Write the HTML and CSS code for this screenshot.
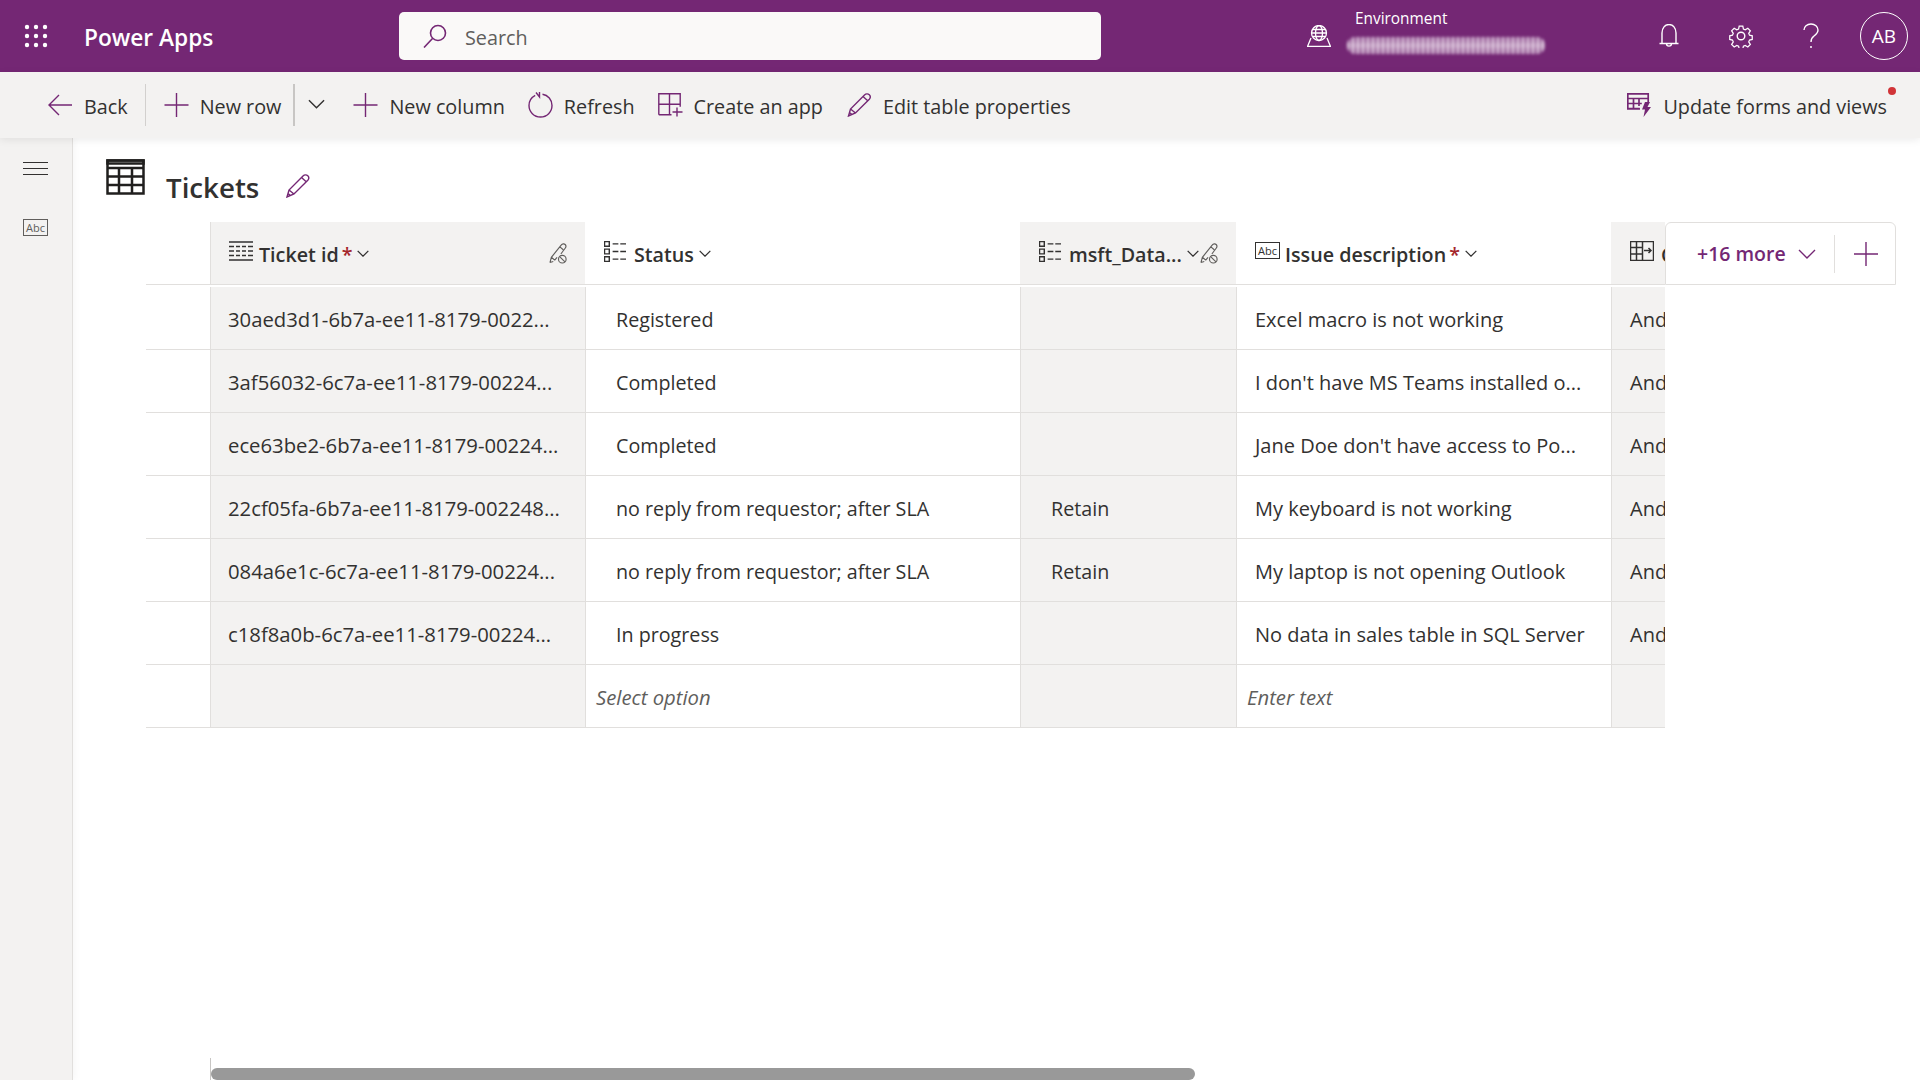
FILE: index.html
```html
<!DOCTYPE html>
<html lang="en">
<head>
    <meta charset="UTF-8">
    <meta name="viewport" content="width=device-width, initial-scale=1.0">
    <title>Tickets - Power Apps</title>
    <link rel="stylesheet" href="styles.css">
</head>
<body>
    <svg class="defs" width="0" height="0">
        <defs>
            <symbol id="i-plus" viewBox="0 0 24 24"><path d="M12 0v24M0 12h24"/></symbol>
            <symbol id="i-chev" viewBox="0 0 18 10"><path d="M1 1l8 8 8-8"/></symbol>
            <symbol id="i-pencil" viewBox="0 0 24 24"><path d="M1 23l2-7L17 2c1.500-1.500 3.500-1.500 4.800-.2 1.200 1.200 1.200 3 0 4.400L8 20zM3 16l5 4M15.500 3.500l5 4.500M2 19.500l2.500 2"/></symbol>
            <symbol id="i-locked" viewBox="0 0 20 24"><path d="M1 21.500l1.500-5.500L13 3c1-1.300 3-1.500 4-.5s1 2.700 0 4l-4.500 6M2.500 16l3.500 3M11.500 5l3.500 3M6 19l2.500-3M1 21.500l3.500-1"/><circle cx="14" cy="18" r="4"/><path d="M11.200 15.200l5.600 5.600"/></symbol>
            <symbol id="i-choice" viewBox="0 0 24 22"><path d="M.5.500h5v5h-5zM.5 8.500h5v5h-5zM.5 16.500h5v5h-5zM9 3h6M17 3h6M9 11h6M17 11h6M9 19h6M17 19h6"/></symbol>
        </defs>
    </svg>

    <header class="topbar">
        <svg class="waffle" width="24" height="24" viewBox="0 0 24 24">
            <circle cx="3" cy="3" r="2.200"/><circle cx="12" cy="3" r="2.200"/><circle cx="21" cy="3" r="2.200"/>
            <circle cx="3" cy="12" r="2.200"/><circle cx="12" cy="12" r="2.200"/><circle cx="21" cy="12" r="2.200"/>
            <circle cx="3" cy="21" r="2.200"/><circle cx="12" cy="21" r="2.200"/><circle cx="21" cy="21" r="2.200"/>
        </svg>
        <div class="app-name">Power Apps</div>
        <div class="search">
            <svg class="search-icon" width="24" height="24" viewBox="0 0 24 24"><circle cx="15" cy="9" r="7.500"/><path d="M9.500 14.500L1 23.500"/></svg>
            <span>Search</span>
        </div>
        <div class="env">
            <svg class="env-icon" width="24" height="22" viewBox="0 0 24 22"><circle cx="12" cy="8" r="7.500"/><ellipse cx="12" cy="8" rx="3.500" ry="7.500"/><path d="M4.500 8h15M5.500 4.500h13M5.500 11.500h13M4 13L.5 21.500h23L20 13"/></svg>
            <div class="env-text">
                <div class="env-label">Environment</div>
                <div class="env-blur"></div>
            </div>
        </div>
        <div class="top-actions">
            <svg class="top-icon" width="20" height="24" viewBox="0 0 20 24"><path d="M.5 19.500h19M3 19.500V9c0-5 3-8.500 7-8.500s7 3.500 7 8.500v10.500M7.500 19.500c0 3.500 5 3.500 5 0"/></svg>
            <svg class="top-icon" width="24" height="24" viewBox="0 0 24 24"><circle cx="12" cy="12" r="3.800"/><path d="M10 1h4l.7 3.300 2 .9 2.900-1.800 2.800 2.800-1.800 2.900.9 2 3 .7v4l-3 .7-.9 2 1.800 2.900-2.800 2.800-2.900-1.800-2 .9-.7 3h-4l-.7-3-2-.9-2.900 1.800-2.800-2.800 1.800-2.900-.9-2-3-.7v-4l3-.7.9-2-1.800-2.900 2.800-2.800 2.900 1.800 2-.9z" transform="translate(1.200 1.200) scale(.9)"/></svg>
            <svg class="top-icon" width="16" height="26" viewBox="0 0 16 26"><path d="M1 7c0-3.500 3-6 7-6s7 2.500 7 6c0 3-2 4.500-4 6-2 1.500-3 2.500-3 6"/><circle class="solid" cx="8" cy="24" r="1"/></svg>
            <div class="avatar">AB</div>
        </div>
    </header>

    <nav class="toolbar">
        <button class="tool tool-back">
            <svg class="ico" width="24" height="22" viewBox="0 0 24 22"><path d="M11 1L1 11l10 10M1 11h23"/></svg>
            Back
        </button>
        <span class="sep"></span>
        <button class="tool tool-new">
            <svg class="ico" width="25" height="24"><use href="#i-plus"/></svg>
            New row
        </button>
        <span class="sep sep-bold"></span>
        <button class="tool tool-chev">
            <svg class="ico-dark" width="17" height="10"><use href="#i-chev"/></svg>
        </button>
        <button class="tool">
            <svg class="ico" width="25" height="24"><use href="#i-plus"/></svg>
            New column
        </button>
        <button class="tool">
            <svg class="ico" width="25" height="26" viewBox="0 0 25 26"><path d="M14.500 2.200C20 3 24 7.700 24 13.500 24 19.900 18.900 25 12.500 25S1 19.900 1 13.500C1 9 3.500 5.300 7.200 3.300M8 .5l3.500 4.500V0"/></svg>
            Refresh
        </button>
        <button class="tool tool-app">
            <svg class="ico" width="25" height="24" viewBox="0 0 25 24"><path d="M.8 21.800V.8h21.400v13M.8 11.300h21.400M11.500.8v21M.8 21.800h12.700M19 14.500v9M14.500 19h10"/></svg>
            Create an app
        </button>
        <button class="tool">
            <svg class="ico" width="25" height="24"><use href="#i-pencil"/></svg>
            Edit table properties
        </button>
        <button class="tool tool-right">
            <svg class="ico ico-bold" width="25" height="24" viewBox="0 0 25 24"><path d="M13 16H.8V.8h20.400V9M.8 5.500h20.400M.8 10.500h14M.8 15.500h12M6.500 5.500V16M12 5.500V13"/><path class="fill" d="M18 9h5l-2.500 5H24l-7.500 10 1.500-7.500h-3z"/></svg>
            Update forms and views
            <span class="red-dot"></span>
        </button>
    </nav>

    <div class="page">
        <aside class="sidenav">
            <div class="burger"><span></span><span></span><span></span></div>
            <div class="abc-box nav-abc">Abc</div>
        </aside>

        <main class="content">
            <div class="title-row">
                <svg class="title-icon" width="39" height="36" viewBox="0 0 39 36"><path d="M1.500 1.500h36v33h-36zM1.500 9h36M1.500 17.500h36M1.500 26h36M13 9v25.500M26 9v25.500"/><path d="M1.500 1.500h36v3h-36z"/></svg>
                <h1>Tickets</h1>
                <svg class="ico title-pencil" width="24" height="24"><use href="#i-pencil"/></svg>
            </div>

            <div class="table-wrap">
                <div class="grid">
                    <div class="row row-head">
                        <div class="cell"></div>
                        <div class="cell cell-grey hd hd-ticket">
                            <svg class="ico-dark hd-icon" width="24" height="20" viewBox="0 0 24 20"><path d="M0 1h24M0 5.500h5M7 5.500h4M13 5.500h4M19 5.500h5M0 10h5M7 10h4M13 10h4M19 10h5M0 14.500h5M7 14.500h4M13 14.500h4M19 14.500h5M0 19h24"/></svg>
                            <span>Ticket id</span><b class="req">*</b>
                            <svg class="ico-dark hd-chev" width="12" height="7"><use href="#i-chev"/></svg>
                            <svg class="ico-grey hd-lock" width="19" height="23"><use href="#i-locked"/></svg>
                        </div>
                        <div class="cell hd">
                            <svg class="ico-dark hd-icon" width="23" height="21"><use href="#i-choice"/></svg>
                            <span>Status</span>
                            <svg class="ico-dark hd-chev" width="12" height="7"><use href="#i-chev"/></svg>
                        </div>
                        <div class="cell cell-grey hd">
                            <svg class="ico-dark hd-icon" width="23" height="21"><use href="#i-choice"/></svg>
                            <span>msft_Data...</span>
                            <svg class="ico-dark hd-chev" width="12" height="7"><use href="#i-chev"/></svg>
                            <svg class="ico-grey hd-lock-near" width="19" height="23"><use href="#i-locked"/></svg>
                        </div>
                        <div class="cell hd">
                            <div class="abc-box hd-abc">Abc</div>
                            <span>Issue description</span><b class="req">*</b>
                            <svg class="ico-dark hd-chev" width="12" height="7"><use href="#i-chev"/></svg>
                        </div>
                        <div class="cell cell-grey hd">
                            <svg class="ico-dark hd-icon" width="24" height="20" viewBox="0 0 24 20"><path d="M.5.500h23v19H.5zM.5 6.500h12M.5 13h12M6.500.5v19M12.500.5v19M14 9.500h7M18.500 7l2.500 2.500-2.500 2.500"/></svg>
                            <span>C</span>
                        </div>
                    </div>

                    <div class="row">
                        <div class="cell"></div>
                        <div class="cell cell-grey pad-first">30aed3d1-6b7a-ee11-8179-0022...</div>
                        <div class="cell pad-wide">Registered</div>
                        <div class="cell cell-grey pad-wide"></div>
                        <div class="cell pad-id">Excel macro is not working</div>
                        <div class="cell cell-grey pad-id">And</div>
                    </div>
                    <div class="row">
                        <div class="cell"></div>
                        <div class="cell cell-grey pad-first">3af56032-6c7a-ee11-8179-00224...</div>
                        <div class="cell pad-wide">Completed</div>
                        <div class="cell cell-grey pad-wide"></div>
                        <div class="cell pad-id">I don't have MS Teams installed o...</div>
                        <div class="cell cell-grey pad-id">And</div>
                    </div>
                    <div class="row">
                        <div class="cell"></div>
                        <div class="cell cell-grey pad-first">ece63be2-6b7a-ee11-8179-00224...</div>
                        <div class="cell pad-wide">Completed</div>
                        <div class="cell cell-grey pad-wide"></div>
                        <div class="cell pad-id">Jane Doe don't have access to Po...</div>
                        <div class="cell cell-grey pad-id">And</div>
                    </div>
                    <div class="row">
                        <div class="cell"></div>
                        <div class="cell cell-grey pad-first">22cf05fa-6b7a-ee11-8179-002248...</div>
                        <div class="cell pad-wide">no reply from requestor; after SLA</div>
                        <div class="cell cell-grey pad-wide">Retain</div>
                        <div class="cell pad-id">My keyboard is not working</div>
                        <div class="cell cell-grey pad-id">And</div>
                    </div>
                    <div class="row">
                        <div class="cell"></div>
                        <div class="cell cell-grey pad-first">084a6e1c-6c7a-ee11-8179-00224...</div>
                        <div class="cell pad-wide">no reply from requestor; after SLA</div>
                        <div class="cell cell-grey pad-wide">Retain</div>
                        <div class="cell pad-id">My laptop is not opening Outlook</div>
                        <div class="cell cell-grey pad-id">And</div>
                    </div>
                    <div class="row">
                        <div class="cell"></div>
                        <div class="cell cell-grey pad-first">c18f8a0b-6c7a-ee11-8179-00224...</div>
                        <div class="cell pad-wide">In progress</div>
                        <div class="cell cell-grey pad-wide"></div>
                        <div class="cell pad-id">No data in sales table in SQL Server</div>
                        <div class="cell cell-grey pad-id">And</div>
                    </div>
                    <div class="row">
                        <div class="cell"></div>
                        <div class="cell cell-grey"></div>
                        <div class="cell pad-hint">Select option</div>
                        <div class="cell cell-grey"></div>
                        <div class="cell pad-hint">Enter text</div>
                        <div class="cell cell-grey"></div>
                    </div>
                </div>

                <div class="more-box">
                    <span class="more-label">+16 more</span>
                    <svg class="ico more-chev" width="18" height="10"><use href="#i-chev"/></svg>
                    <span class="more-sep"></span>
                    <svg class="ico more-plus" width="24" height="24"><use href="#i-plus"/></svg>
                </div>
            </div>

            <div class="scroll-track"><div class="scroll-thumb"></div></div>
        </main>
    </div>
</body>
</html>
```

FILE: styles.css
```css
* {
    box-sizing: border-box;
}

html, body {
    height: 100%;
}

body {
    margin: 0;
    font-family: "Open Sans", "Noto Sans", sans-serif;
    font-size: 19.800px;
    color: #323130;
    background: #fff;
    display: flex;
    flex-direction: column;
    overflow: hidden;
}

svg {
    fill: none;
    flex: none;
    display: block;
}

.defs {
    position: absolute;
}

/* top bar */
.topbar {
    height: 72px;
    flex: none;
    background: #742774;
    color: #fff;
    display: flex;
    align-items: center;
}

.waffle {
    margin-left: 24px;
    fill: #fff;
}

.app-name {
    margin-left: 36px;
    padding-top: 2px;
    width: 315px;
    font-size: 22.700px;
    font-weight: 600;
}

.search {
    width: 702px;
    height: 48px;
    background: #faf9f8;
    border-radius: 5px;
    display: flex;
    align-items: center;
    padding-left: 24px;
    gap: 18px;
    color: #605e5c;
}

.search span {
    padding-top: 2px;
}

.search-icon {
    stroke: #742774;
    stroke-width: 1.6;
}

.env {
    margin-left: 206px;
    display: flex;
    align-items: center;
    gap: 24px;
}

.env-icon {
    stroke: #fff;
    stroke-width: 1.3;
}

.env-text {
    width: 200px;
    padding-top: 2px;
}

.env-label {
    font-size: 15.400px;
    line-height: 22px;
    margin-top: -12px;
}

.env-blur {
    width: 198px;
    height: 17px;
    margin: 7px 0 0 -8px;
    border-radius: 8px;
    background:
        linear-gradient(180deg, transparent 15%, rgba(255, 255, 255, 0.35) 50%, transparent 85%),
        repeating-linear-gradient(90deg, #dcc6dc 0 2px, #9a5f9a 2px 5px);
    filter: blur(1.600px);
}

.top-actions {
    margin-left: auto;
    display: flex;
    align-items: center;
    margin-right: 12px;
}

.top-icon {
    stroke: #fff;
    stroke-width: 1.4;
    margin-right: 50px;
}

.top-icon .solid {
    fill: #fff;
    stroke: none;
}

.avatar {
    width: 48px;
    height: 48px;
    margin-left: -9px;
    border: 1px solid #fff;
    border-radius: 50%;
    display: flex;
    align-items: center;
    justify-content: center;
    font-size: 19px;
}

/* command bar */
.toolbar {
    height: 66px;
    flex: none;
    background: #f3f2f1;
    display: flex;
    align-items: center;
    box-shadow: 0 2px 8px rgba(0, 0, 0, 0.08);
    position: relative;
    z-index: 2;
}

.tool {
    height: 42px;
    padding: 2px 11px 0 12px;
    border: none;
    background: none;
    font: inherit;
    color: #323130;
    display: flex;
    align-items: center;
    gap: 11px;
    white-space: nowrap;
}

.tool svg {
    margin-top: -2px;
}

.tool-back {
    padding-left: 48px;
    padding-right: 17px;
    gap: 12px;
}

.tool-new {
    padding-left: 18px;
    padding-right: 12px;
}

.tool-app {
    padding-right: 12px;
}

.tool-chev {
    padding: 0 16px 0 13px;
}

.tool-right {
    margin-left: auto;
    margin-right: 21px;
    padding-right: 12px;
    position: relative;
}

.ico {
    stroke: #742774;
    stroke-width: 1.4;
}

.ico-bold {
    stroke-width: 1.700;
}

.ico .fill {
    fill: #742774;
    stroke: none;
}

.ico-dark {
    stroke: #323130;
    stroke-width: 1.500;
}

.ico-grey {
    stroke: #605e5c;
    stroke-width: 1.200;
}

.sep {
    width: 1px;
    height: 42px;
    background: #d2d0ce;
    flex: none;
}

.sep-bold {
    width: 2px;
    background: #c8c6c4;
}

.red-dot {
    position: absolute;
    top: 3px;
    right: 3px;
    width: 8px;
    height: 8px;
    border-radius: 50%;
    background: #d13438;
}

/* page body */
.page {
    flex: 1;
    display: flex;
    min-height: 0;
}

.sidenav {
    width: 73px;
    flex: none;
    background: #f3f2f1;
    border-right: 1px solid #e1dfdd;
    box-shadow: 2px 0 8px rgba(0, 0, 0, 0.04);
    padding: 24px 0 0 23px;
}

.burger {
    width: 25px;
    display: flex;
    flex-direction: column;
    gap: 5px;
}

.burger span {
    height: 1px;
    background: #323130;
}

.abc-box {
    width: 25px;
    height: 17px;
    border: 1px solid #323130;
    font-size: 11px;
    font-weight: 400;
    line-height: 15px;
    text-align: center;
    background: #fff;
}

.nav-abc {
    margin-top: 44px;
    border-color: #605e5c;
    background: #f3f2f1;
    color: #605e5c;
}

.content {
    flex: 1;
    min-width: 0;
    display: flex;
    flex-direction: column;
}

.title-row {
    height: 84px;
    flex: none;
    display: flex;
    padding: 21px 0 0 33px;
}

.title-row h1 {
    margin: 9px 0 0 21px;
    font-size: 27.700px;
    line-height: 38px;
    font-weight: 600;
}

.title-pencil {
    margin: 15px 0 0 27px;
}

.title-icon {
    stroke: #201f1e;
    stroke-width: 2.500;
}

/* table */
.table-wrap {
    display: flex;
    align-items: flex-start;
    margin-left: 73px;
}

.grid {
    width: 1519px;
    flex: none;
    overflow: hidden;
}

.row {
    display: grid;
    grid-template-columns: 64px 375px 435px 216px 375px 54px;
    height: 63px;
    border-bottom: 1px solid #e1dfdd;
    font-size: 20px;
}

.row-head {
    margin-bottom: 2px;
    font-size: 19.700px;
}

.cell {
    display: flex;
    align-items: center;
    padding-top: 2px;
    white-space: nowrap;
    overflow: hidden;
    border-left: 1px solid #e1dfdd;
}

.cell:first-child {
    border-left: none;
}

.cell-grey {
    background: #f3f2f1;
}

.pad-first {
    padding-left: 17px;
    font-size: 20.300px;
}

.pad-id {
    padding-left: 18px;
}

.pad-wide {
    padding-left: 30px;
    font-size: 19.700px;
}

.pad-hint {
    padding-left: 10px;
    font-size: 20.300px;
    font-style: italic;
    color: #605e5c;
}

.hd {
    font-weight: 600;
    border-left: none;
    padding: 2px 0 0 19px;
}

.hd-icon {
    margin: -6px 7px 0 0;
}

.hd-ticket {
    padding-left: 18px;
    border-left: 1px solid #e1dfdd;
}

.hd-ticket .hd-icon {
    margin-right: 6px;
}

.hd-abc {
    margin: -7px 5px 0 0;
    flex: none;
}

.req {
    color: #a4262c;
    margin-left: 3px;
    font-weight: 600;
}

.hd-chev {
    margin: -2px 0 0 5px;
    stroke-width: 1.900;
}

.hd-lock {
    margin: -2px 17px 0 auto;
}

.hd-lock-near {
    margin: -2px 0 0 1px;
}

.more-box {
    width: 231px;
    height: 63px;
    flex: none;
    display: flex;
    align-items: center;
    border: 1px solid #e1dfdd;
    border-radius: 6px 6px 0 0;
    padding-left: 31px;
    color: #742774;
    font-weight: 600;
    font-size: 19.500px;
}

.more-chev {
    margin-left: 12px;
}

.more-sep {
    width: 1px;
    height: 38px;
    margin-left: 18px;
    background: #e1dfdd;
}

.more-plus {
    margin-left: 19px;
}

/* horizontal scroll */
.scroll-track {
    margin: auto 0 0 137px;
    height: 22px;
    flex: none;
    border-left: 1px solid #c8c6c4;
    display: flex;
    align-items: flex-end;
}

.scroll-thumb {
    width: 984px;
    height: 12px;
    border-radius: 6px;
    background: #999;
}
```
